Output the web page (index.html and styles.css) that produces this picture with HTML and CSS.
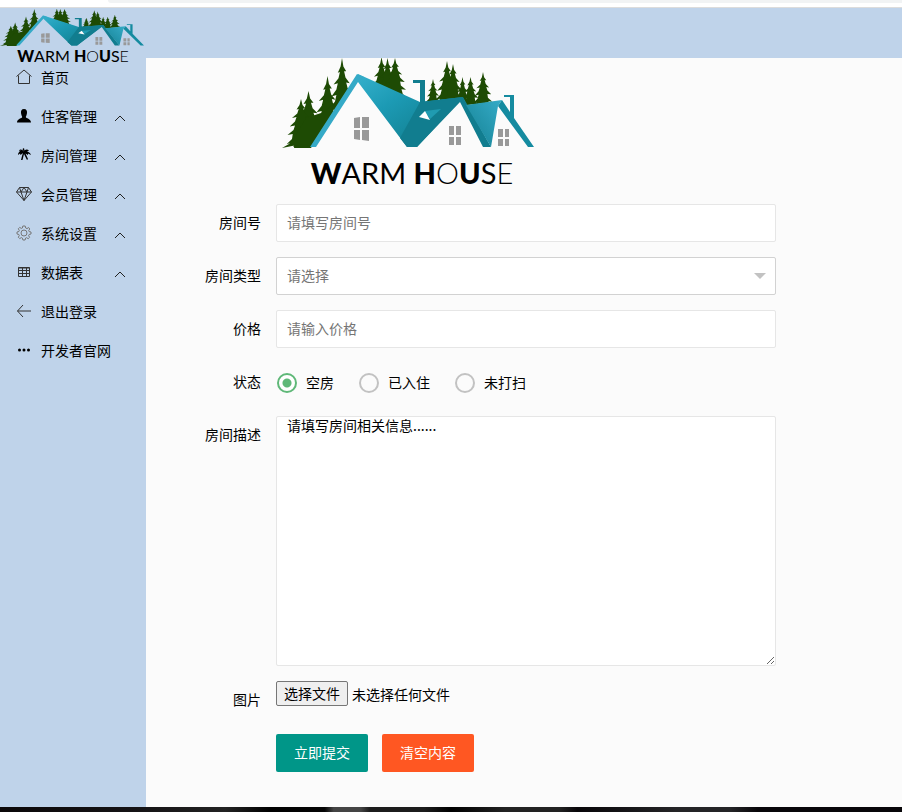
FILE: index.html
```html
<!DOCTYPE html>
<html lang="zh-CN">
<head>
<meta charset="utf-8">
<title>Warm House</title>
<link rel="stylesheet" href="styles.css">
</head>
<body>
<svg class="defs" aria-hidden="true">
  <defs>
    <linearGradient id="roof-a" x1="0" y1="0" x2="1" y2="1">
      <stop offset="0" stop-color="#35b0cc"/><stop offset=".35" stop-color="#1c9ab4"/><stop offset="1" stop-color="#0d737f"/>
    </linearGradient>
    <linearGradient id="roof-b" x1="0" y1="1" x2="1" y2="0">
      <stop offset="0" stop-color="#137f91"/><stop offset="1" stop-color="#36acc8"/>
    </linearGradient>
    <clipPath id="sky"><path d="M0 0H252V44L220 43 185 47 181 40 138 45 75 17 29 90H0Z"/></clipPath>
    <symbol id="tree" viewBox="0 0 40 100" preserveAspectRatio="none" overflow="visible">
      <path d="M20 0 22 12 26 19 23 19 25 28 31 36 26 35 28 43 35 52 28 51 29 60 37 69 30 68 32 78 40 88 30 86 29 100H11L10 87 1 90 8 80 9 70 2 72 10 62 12 53 5 55 12 45 14 36 8 38 15 29 17 20 14 21 18 12Z"/>
    </symbol>
    <symbol id="house" viewBox="0 0 252 90" preserveAspectRatio="none">
      <g clip-path="url(#sky)" fill="#1e4b04">
        <use href="#tree" x="46" y="0" width="28" height="70"/>
        <use href="#tree" x="31" y="18" width="29" height="66"/>
        <use href="#tree" x="10" y="33" width="33" height="62"/>
        <use href="#tree" x="4" y="41" width="30" height="50"/>
        <path d="M0 90 7 86 12 80 24 60 42 54 52 45 40 90 20 86Z"/>
        <use href="#tree" x="87" y="-1" width="25" height="52"/>
        <use href="#tree" x="93" y="0" width="25" height="52"/>
        <use href="#tree" x="100" y="0" width="26" height="46"/>
        <use href="#tree" x="143" y="21" width="16" height="32"/>
        <use href="#tree" x="152" y="3" width="26" height="54"/>
        <use href="#tree" x="159" y="6" width="24" height="50"/>
        <use href="#tree" x="171" y="19" width="19" height="40"/>
        <use href="#tree" x="178" y="19" width="21" height="40"/>
        <use href="#tree" x="190" y="14" width="22" height="43"/>
      </g>
      <path fill="url(#roof-a)" d="M76 16 138 44 181 39 135 89H125L76 24Z"/>
      <path fill="#35aac7" d="M28 89 75 16 82 19 76 24 34 89Z"/>
      <path fill="#117d8f" d="M138 45V25H131V22H143V45ZM138 44 181 39 209 89H201L178 44 135 89H125L118 80Z"/>
      <path fill="url(#roof-b)" d="M184 47 220 42 216 48 209 89Z"/>
      <path fill="#158ba0" d="M220 42 228 54V39H222V37H232V60L252 89H246L216 48Z"/>
      <path fill="#209bb1" d="M143 53 159 51 148 61Z"/>
      <path fill="#fff" d="M143 53 137 59 148 62Z"/>
      <path fill="#999" d="M72 60 78 59V70H72ZM80 59H87V70H80ZM72 72H78V82L72 81ZM80 72H87V83L80 82ZM167 68H172V77H167ZM174 68H179V77H174ZM167 79H172V87H167ZM174 79H179V87H174ZM216 71H221V79H216ZM223 71H227V79H223ZM216 81H221V88H216ZM223 81H227V88H223Z"/>
    </symbol>
    <symbol id="chevron" viewBox="0 0 12 12"><path d="M1 9 6 4 11 9"/></symbol>
  </defs>
</svg>

<div class="browser-edge"><span class="address"></span></div>
<header class="topbar">
  <a class="brand" href="#" aria-label="Warm House">
    <svg class="brand-art" aria-hidden="true"><use href="#house" width="100%" height="100%"/></svg>
    <span class="wordmark"><b>W</b>ARM <b>H</b><i>O</i><b>U</b>S<i>E</i></span>
  </a>
</header>

<div class="shell">
  <nav class="sidebar">
    <a class="item" href="#"><svg class="icon" viewBox="0 0 16 16"><path d="M.5 7.5 8 1 15.500 7.500M2.500 6.500V14.500H13.500V6.500"/></svg><span>首页</span></a>
    <a class="item" href="#"><svg class="icon solid" viewBox="0 0 16 16"><path d="M8 1C5.500 1 4.800 3 5 5 5.200 7 6 8 6.200 9 6.200 10.500 1 10.500 1 14.500H15C15 10.500 9.800 10.500 9.800 9 10 8 10.800 7 11 5 11.200 3 10.500 1 8 1Z"/></svg><span>住客管理</span><svg class="chevron"><use href="#chevron"/></svg></a>
    <a class="item" href="#"><svg class="icon solid" viewBox="0 0 16 16"><path d="M8 5C6 2 4 2 3 4L5 3.500C3 4.500 2 6 2 8L4 6.500 4.500 8 7 6 6 9 5 13 6.500 13 8 7 11 13 12 12 9.500 6.500 12 8 12 6.500 15 8C14.500 6 13 5 11 4.500L13 3.500C11.500 2 10 2 8.500 3.500L8 1 6.500 2Z"/></svg><span>房间管理</span><svg class="chevron"><use href="#chevron"/></svg></a>
    <a class="item" href="#"><svg class="icon" viewBox="0 0 16 16"><path d="M3.500 1.500H12.500L15.500 6 8 14.500.5 6ZM.5 6H15.500M3.500 1.500 5 6 8 14.500 11 6 12.500 1.500M5 6 8 1.500 11 6"/></svg><span>会员管理</span><svg class="chevron"><use href="#chevron"/></svg></a>
    <a class="item" href="#"><svg class="icon faint" viewBox="0 0 16 16"><circle cx="8" cy="8" r="3"/><path d="M6.800 1H9.200L9.700 3 11 3.600 12.600 2.500 13.800 4 12.700 5.500 13.100 6.600 15 7V9L13.100 9.500 12.600 10.700 13.600 12.300 12.200 13.700 10.600 12.700 9.600 13.100 9.100 15H6.900L6.400 13.100 5.300 12.600 3.700 13.600 2.300 12.200 3.300 10.600 2.900 9.500 1 9V7L2.900 6.500 3.300 5.400 2.300 3.800 3.700 2.400 5.300 3.400 6.400 3Z"/></svg><span>系统设置</span><svg class="chevron"><use href="#chevron"/></svg></a>
    <a class="item" href="#"><svg class="icon" viewBox="0 0 16 16"><path d="M2.500 3.500H13.500V12.500H2.500ZM2.500 6.500H13.500M2.500 9.500H13.500M6.500 3.500V12.500M10.500 3.500V12.500M2.500 4H13.500"/></svg><span>数据表</span><svg class="chevron"><use href="#chevron"/></svg></a>
    <a class="item" href="#"><svg class="icon" viewBox="0 0 16 16"><path d="M7 2 1.500 8 7 14M1.500 8H15"/></svg><span>退出登录</span></a>
    <a class="item" href="#"><svg class="icon solid" viewBox="0 0 16 16"><circle cx="3.500" cy="8" r="1.500"/><circle cx="8" cy="8" r="1.500"/><circle cx="12.500" cy="8" r="1.500"/></svg><span>开发者官网</span></a>
  </nav>

  <main class="content">
    <div class="hero">
      <svg class="hero-art" aria-hidden="true"><use href="#house" width="100%" height="100%"/></svg>
      <span class="wordmark large"><b>W</b>ARM <b>H</b><i>O</i><b>U</b>S<i>E</i></span>
    </div>
    <form class="form">
      <div class="row"><label class="name" for="room">房间号</label><input class="field" id="room" type="text" placeholder="请填写房间号"></div>
      <div class="row"><label class="name" for="type">房间类型</label><div class="select-wrap"><select class="field" id="type"><option>请选择</option></select></div></div>
      <div class="row"><label class="name" for="price">价格</label><input class="field" id="price" type="text" placeholder="请输入价格"></div>
      <div class="row" role="radiogroup" aria-labelledby="state"><span class="name" id="state">状态</span>
        <div class="radios">
          <label><input type="radio" name="state" checked><span>空房</span></label>
          <label><input type="radio" name="state"><span>已入住</span></label>
          <label><input type="radio" name="state"><span>未打扫</span></label>
        </div>
      </div>
      <div class="row"><label class="name" for="desc">房间描述</label><textarea class="field" id="desc">请填写房间相关信息......</textarea></div>
      <div class="row"><label class="name" for="photo">图片</label>
        <div class="file"><input id="photo" type="file"><label class="file-button" for="photo">选择文件</label><span>未选择任何文件</span></div>
      </div>
      <div class="actions"><button class="submit" type="button">立即提交</button><button class="clear" type="button">清空内容</button></div>
    </form>
  </main>
</div>
<div class="screen-edge"></div>
</body>
</html>
```
FILE: styles.css
```css
* { box-sizing: border-box; }

body {
  margin: 0;
  min-height: 100vh;
  display: flex;
  flex-direction: column;
  background: #fbfbfb;
  color: #000;
  font: 14px/20px "Noto Sans CJK SC", sans-serif;
}

input, select, textarea, button { font: inherit; }
a { color: inherit; text-decoration: none; }

.defs { position: absolute; width: 0; height: 0; }

.browser-edge {
  height: 8px;
  padding-left: 108px;
  background: #fff;
  border-bottom: 1px solid #dcdcdc;
}
.address {
  display: block;
  height: 3px;
  background: #f1f3f4;
  border-bottom-left-radius: 8px;
}

.topbar { height: 50px; background: #bfd3ea; }
.brand {
  position: relative;
  display: flex;
  flex-direction: column;
  align-items: center;
  width: 146px;
  padding-top: 1px;
}
.brand-art { display: block; align-self: flex-start; width: 144px; height: 37px; }

.wordmark {
  font-family: Lato, sans-serif;
  font-size: 16px;
  line-height: 20px;
  font-weight: 400;
  white-space: pre;
}
.wordmark b { font-weight: 900; }
.wordmark i { font-weight: 300; font-style: normal; }
.wordmark.large { padding-left: 8px; font-size: 29px; line-height: 50px; }

.shell { flex: 1; display: flex; }

.sidebar { flex: none; width: 146px; background: #bfd3ea; }
.item {
  display: flex;
  align-items: center;
  height: 39px;
  padding: 0 20px 2px 16px;
}
.icon {
  width: 16px;
  height: 16px;
  margin-right: 9px;
  fill: none;
  stroke: #333;
}
.icon.solid { fill: #000; stroke: none; }
.icon.faint { stroke: #777; }
.chevron {
  width: 12px;
  height: 12px;
  margin: 4px 0 0 auto;
  fill: none;
  stroke: #222;
}

.content { flex: 1; min-width: 0; padding: 0 15px 35px; }

.hero {
  display: flex;
  flex-direction: column;
  align-items: center;
  width: 264px;
  height: 131px;
  margin: 0 0 15px 115px;
}
.hero-art { flex: none; display: block; width: 252px; height: 90px; }

.form { display: grid; gap: 15px; }
.row {
  display: flex;
  align-items: flex-start;
  height: auto;
  min-height: 38px;
  padding-right: 111px;
}
.name {
  flex: none;
  width: 100px;
  margin-right: 15px;
  line-height: 36px;
  text-align: right;
}

.field {
  flex: 1;
  min-width: 0;
  height: 38px;
  padding: 0 10px 2px;
  border: 1px solid #e6e6e6;
  border-radius: 2px;
  background: #fff;
  color: #000;
  outline: none;
}
.field::placeholder { color: #757575; }
textarea.field {
  display: block;
  height: 250px;
  line-height: 16px;
  resize: vertical;
}

.select-wrap { position: relative; flex: 1; display: flex; }
select.field {
  appearance: none;
  border-color: #d2d2d2;
  color: #757575;
}
.select-wrap::after {
  content: "";
  position: absolute;
  right: 10px;
  top: 16px;
  border: 6px solid transparent;
  border-top-color: #c2c2c2;
  border-bottom: 0;
  pointer-events: none;
}

.radios { display: flex; gap: 25px; height: 38px; padding: 10px 0 0 1px; }
.radios label { display: flex; gap: 9px; height: 20px; line-height: 18px; }
.radios input {
  appearance: none;
  width: 20px;
  height: 20px;
  margin: 0;
  border: 2px solid #c2c2c2;
  border-radius: 50%;
}
.radios input:checked {
  border-color: #5fb878;
  background: radial-gradient(circle, #5fb878 4px, #fff 5px);
}

.file { display: flex; align-items: center; gap: 4px; height: 25px; }
.file input { position: absolute; width: 1px; height: 1px; opacity: 0; }
.file-button {
  height: 25px;
  padding: 0 7px;
  border: 1px solid #767676;
  border-radius: 2px;
  background: #efefef;
  line-height: 23px;
}

.actions { display: flex; gap: 14px; padding-left: 115px; }
.actions button {
  height: 38px;
  padding: 0 18px 2px;
  border: 0;
  border-radius: 2px;
  color: #fff;
}
.submit { background: #009688; }
.clear { background: #ff5722; }

.screen-edge {
  height: 5px;
  background: linear-gradient(90deg, #0b0809, #151315 15%, #222 25%, #000 30%, #050505 36%, #444 37%, #444 40%, #1c1c1c 41%, #1c1c1c 47%, #000 50%, #222 56%, #222 62%, #080609 64%, #242426 75%, #242426 81%, #080609 84%, #080609);
}
```
